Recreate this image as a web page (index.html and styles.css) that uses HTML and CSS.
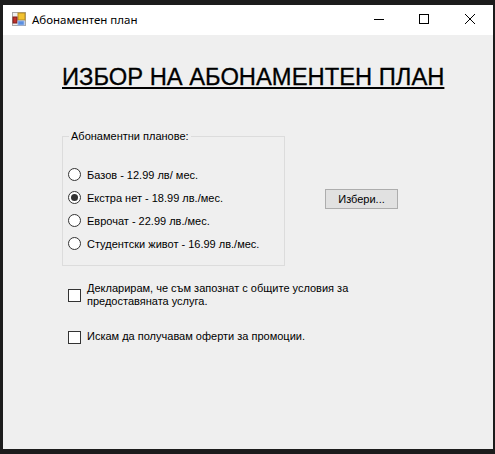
FILE: index.html
```html
<!DOCTYPE html>
<html>
<head>
  <meta charset="UTF-8">
  <title>Абонаментен план</title>
  <link rel="stylesheet" href="styles.css">
</head>
<body>

<div class="window">
  <div class="title-bar">
    <svg class="app-icon" width="14" height="14" viewBox="0 0 14 14">
      <rect x="0.5" y="0.5" width="13" height="13" fill="#efefef" stroke="#a8a8a8"/>
      <rect x="6" y="1" width="7" height="7" fill="#f2c230" stroke="#b58a20"/>
      <rect x="1" y="5" width="4" height="6" fill="#c0302a" stroke="#7c1f1a"/>
      <rect x="6" y="9" width="6" height="4" fill="#5b8fe0" stroke="#8fb0e8"/>
    </svg>
    <span class="title-text">Абонаментен план</span>
    <div class="window-buttons">
      <svg width="45" height="30" viewBox="0 0 45 30"><path d="M18 14.5h10" stroke="#000" fill="none"/></svg>
      <svg width="45" height="30" viewBox="0 0 45 30"><rect x="18.5" y="9.5" width="9" height="9" stroke="#000" fill="none"/></svg>
      <svg width="45" height="30" viewBox="0 0 45 30"><path d="M19 9l10 10M29 9l-10 10" stroke="#000" fill="none"/></svg>
    </div>
  </div>

  <div class="content">
    <h1 class="heading">ИЗБОР НА АБОНАМЕНТЕН ПЛАН</h1>

    <div class="plan-row">
      <fieldset class="plans">
        <legend>Абонаментни планове:</legend>
        <label class="radio-row"><span class="radio"></span>Базов - 12.99 лв/ мес.</label>
        <label class="radio-row"><span class="radio checked"></span>Екстра нет - 18.99 лв./мес.</label>
        <label class="radio-row"><span class="radio"></span>Еврочат - 22.99 лв./мес.</label>
        <label class="radio-row"><span class="radio"></span>Студентски живот - 16.99 лв./мес.</label>
      </fieldset>
      <button class="pick-button">Избери...</button>
    </div>

    <label class="check-row terms"><span class="checkbox"></span><span class="check-text">Декларирам, че съм запознат с общите условия за предоставяната услуга.</span></label>
    <label class="check-row promo"><span class="checkbox"></span><span class="check-text">Искам да получавам оферти за промоции.</span></label>
  </div>
</div>

</body>
</html>
```

FILE: styles.css
```css
html, body {
	height: 100%;
}

body {
	margin: 0;
	padding: 5px 2px 5px 3px;
	box-sizing: border-box;
	background-color: #1c1c1c;
	font-family: "Liberation Sans", Arial, sans-serif;
	font-size: 11px;
	color: #000;
}

.window {
	height: 100%;
	display: flex;
	flex-direction: column;
	background-color: #efefef;
}

/* Title bar */
.title-bar {
	height: 30px;
	flex-shrink: 0;
	display: flex;
	align-items: center;
	background-color: white;
}

.app-icon {
	margin-left: 9px;
	margin-right: 6px;
	margin-bottom: 2px;
}

.title-text {
	font-family: "Noto Sans", "Open Sans", sans-serif;
	font-size: 11.5px;
	padding-bottom: 2px;
}

.window-buttons {
	margin-left: auto;
	margin-right: 2px;
	display: flex;
}

/* Form area */
.content {
	flex: 1;
	padding-left: 59px;
}

.heading {
	margin: 29px 0 0;
	font-size: 23.75px;
	line-height: 26px;
	font-weight: normal;
	white-space: nowrap;
	text-decoration: underline;
	-webkit-text-stroke: 0.3px #000;
}

.plan-row {
	margin-top: 39px;
	display: flex;
	align-items: flex-start;
}

.plans {
	width: 223px;
	height: 137px;
	margin: 0;
	padding: 20px 0 0 5px;
	box-sizing: border-box;
	border: 1px solid #dcdcdc;
}

.plans legend {
	padding: 0 2px;
	margin-left: 1px;
	line-height: 14px;
}

.radio-row {
	height: 23px;
	display: flex;
	align-items: center;
}

.radio {
	width: 13px;
	height: 13px;
	margin-right: 6px;
	box-sizing: border-box;
	border: 1px solid #333;
	border-radius: 50%;
	background-color: white;
	display: flex;
	align-items: center;
	justify-content: center;
}

.radio.checked::after {
	content: "";
	width: 7px;
	height: 7px;
	border-radius: 50%;
	background-color: #333;
}

.pick-button {
	width: 73px;
	height: 20px;
	margin-top: 60px;
	margin-left: 40px;
	padding: 0;
	border: 1px solid #adadad;
	background-color: #e1e1e1;
	font-family: inherit;
	font-size: 11px;
	color: #000;
}

.check-row {
	display: flex;
	align-items: flex-start;
	margin-left: 6px;
	width: 300px;
}

.terms {
	margin-top: 16px;
}

.promo {
	margin-top: 22px;
}

.checkbox {
	width: 13px;
	height: 13px;
	flex-shrink: 0;
	margin-top: 7px;
	margin-right: 6px;
	box-sizing: border-box;
	border: 1px solid #333;
	background-color: white;
}

.promo .checkbox {
	margin-top: 1px;
}

.check-text {
	line-height: 13px;
}
```
